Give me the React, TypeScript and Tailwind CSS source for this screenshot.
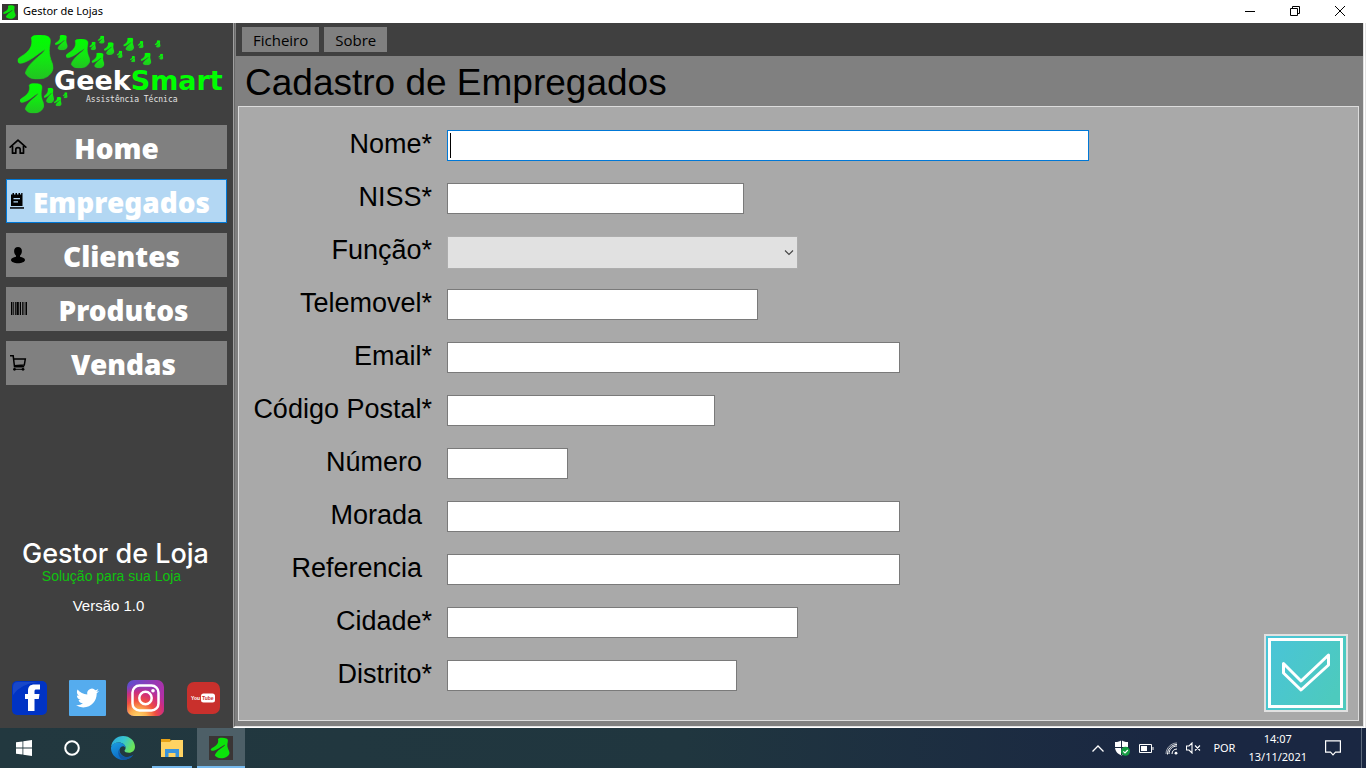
import React from "react";

const BLOB =
  "M94 113 C100 103 126 103 142 109 C151 113 152 119 150 132 C147 146 147 158 150 170 C152 182 160 192 160 205 C154 226 136 238 112 238 C94 238 80 229 76 219 C80 204 92 190 108 176 C122 164 134 156 135 148 C126 154 112 164 98 174 C84 183 70 190 60 190 C53 189 51 180 55 176 C64 168 78 162 85 152 C94 142 98 130 94 113 Z";

const LOGO_BLOBS: [number, number, number, number][] = [
  [53, 105, 107, 133],
  [165, 105, 38, 46],
  [198, 117, 72, 88],
  [268, 125, 20, 26],
  [293, 107, 21, 24],
  [312, 127, 31, 38],
  [275, 158, 38, 47],
  [350, 152, 18, 22],
  [370, 113, 32, 40],
  [390, 168, 16, 19],
  [413, 123, 18, 22],
  [422, 158, 32, 38],
  [464, 121, 18, 22],
  [475, 161, 15, 18],
  [60, 250, 72, 90],
  [132, 263, 30, 47],
  [162, 291, 23, 28],
  [188, 277, 15, 18],
];

function BlobIcon({ className }: { className: string }) {
  return (
    <svg className={className} viewBox="0 0 24 24" aria-hidden="true">
      <rect width="24" height="24" fill="#3a3535" />
      <path d={BLOB} fill="#0be30b" transform="translate(-7.5 -14.2) scale(0.175 0.153)" />
    </svg>
  );
}

function Logo() {
  return (
    <svg
      className="h-[97px] w-[233px] shrink-0"
      viewBox="0 23 233 97"
      role="img"
      aria-label="GeekSmart Assistência Técnica"
    >
      <defs>
        <linearGradient id="leaf" x1="0" y1="0" x2="0" y2="1">
          <stop offset="0" stopColor="#00ff00" />
          <stop offset="0.5" stopColor="#11ea11" />
          <stop offset="1" stopColor="#22c322" />
        </linearGradient>
      </defs>
      <g transform="scale(0.33333)">
        {LOGO_BLOBS.map(([x, y, w, h], i) => (
          <svg key={i} x={x} y={y} width={w} height={h} viewBox="53 105 107 133" preserveAspectRatio="none">
            <path d={BLOB} fill="url(#leaf)" stroke="url(#leaf)" strokeWidth="2" />
          </svg>
        ))}
      </g>
      <text x="54" y="90" className="font-['DejaVu_Sans',sans-serif] text-[27px] font-bold">
        <tspan fill="#ffffff">Geek</tspan>
        <tspan fill="#00ff00">Smart</tspan>
      </text>
      <text x="86" y="102" fill="#e4e4e4" className="font-['DejaVu_Sans_Mono',monospace] text-[8px]">
        Assistência Técnica
      </text>
    </svg>
  );
}

const HomeIcon = (
  <svg className="h-[18px] w-[18px]" viewBox="0 0 18 18" fill="none" stroke="#000" strokeWidth="1.7">
    <path d="M1.2 9.2 9 2.2l7.800 7" strokeLinecap="round" strokeLinejoin="round" />
    <path d="M3.500 7.800v7.400h3.300v-3.600c0-1.200.8-2 2.200-2s2.200.8 2.200 2v3.600h3.300V7.800" strokeLinejoin="round" />
  </svg>
);
const NoteIcon = (
  <svg className="h-[18px] w-[18px]" viewBox="0 0 18 18" fill="#000">
    <path d="M2 2.500h1.500V1H5v1.500h1.500V1H8v1.500h1.500V1H11v1.500h1.200V1h1.300v13H2z" />
    <path d="M4.500 6.600h6.500M4.500 9.800h4.500" stroke="#b4d7f3" strokeWidth="1.300" />
    <path d="M1 15.200h14v1.500H1z" />
  </svg>
);
const PersonIcon = (
  <svg className="h-[18px] w-[18px]" viewBox="0 0 18 18" fill="#000">
    <path d="M9 1c2.300 0 3.900 1.500 3.900 3.900 0 2-.8 3.700-1.900 4.700v1.100c2.600.5 5 1.500 5 3.300 0 2-3.500 3.200-7 3.200s-7-1.200-7-3.200c0-1.800 2.400-2.800 5-3.300V9.600c-1.100-1-1.900-2.700-1.900-4.700C5.100 2.500 6.700 1 9 1z" />
  </svg>
);
const BarcodeIcon = (
  <svg className="h-[18px] w-[18px]" viewBox="0 0 18 18" fill="#000">
    <path d="M2 2h1.400v13H2zM4.300 2h.8v13h-.8zM6 2h.8v13H6zM7.500 2h2.300v13H7.500zM10.800 2h1.200v13h-1.200zM13 2h.8v13H13zM14.500 2h.8v13h-.8zM16.500 2h1.500v13h-1.500z" />
  </svg>
);
const CartIcon = (
  <svg className="h-[18px] w-[18px]" viewBox="0 0 18 18" fill="none" stroke="#000" strokeWidth="1.500">
    <path d="M1 1.800h3.200l1.300 11h9.700M4.500 5h11.800l-1 6-10 .8" />
    <circle cx="5.500" cy="15.300" r="1.400" fill="#000" stroke="none" />
    <circle cx="14" cy="15.300" r="1.400" fill="#000" stroke="none" />
    <path d="M5.500 15.300H14" strokeWidth="1" />
  </svg>
);

const NAV = [
  { label: "Home", icon: HomeIcon, pad: "pr-5" },
  { label: "Empregados", icon: NoteIcon, pad: "pr-[10px]" },
  { label: "Clientes", icon: PersonIcon, pad: "pr-[10px]" },
  { label: "Produtos", icon: BarcodeIcon, pad: "pr-[6px]" },
  { label: "Vendas", icon: CartIcon, pad: "pr-[6px]" },
];

function NavButton({ label, icon, pad, active }: { label: string; icon: React.ReactNode; pad: string; active: boolean }) {
  return (
    <button
      type="button"
      className={
        "flex h-11 w-full items-center border pl-[2px] " +
        pad +
        (active ? " border-[#0078d7] bg-[#b3d7f3]" : " border-[#808080] bg-[#808080]")
      }
    >
      {icon}
      <span className="flex-1 pt-[2px] text-center font-['Noto_Sans',sans-serif] text-[28px] leading-9 font-black text-white">
        {label}
      </span>
    </button>
  );
}

function Facebook() {
  return (
    <svg className="h-[34px] w-[35px]" viewBox="0 0 35 34">
      <rect width="35" height="34" rx="5" fill="#0033c4" />
      <path d="M1 14V6q0-5 5-5h20Q8 3 1 14z" fill="#2f5bd0" opacity=".5" />
      <path d="M16 30V18h-3v-5h3v-3c0-4.500 2.200-6.500 6.500-6.500H28v5h-3.500c-1.500 0-2 .6-2 2V13h5l-.7 5h-4.300v12z" fill="#fff" />
    </svg>
  );
}
function Twitter() {
  return (
    <svg className="h-9 w-[37px]" viewBox="0 0 37 36">
      <rect width="37" height="36" rx="1" fill="#55acee" />
      <path
        transform="translate(7 6.500) scale(0.96)"
        fill="#fff"
        d="M23.950 4.570a10 10 0 0 1-2.820.77 4.960 4.960 0 0 0 2.160-2.720c-.95.550-2 .95-3.130 1.190a4.920 4.920 0 0 0-8.380 4.480C7.690 8.090 4.070 6.130 1.640 3.160a4.820 4.820 0 0 0-.67 2.480c0 1.710.87 3.210 2.190 4.100a4.900 4.900 0 0 1-2.230-.62v.06a4.920 4.920 0 0 0 3.950 4.830 5 5 0 0 1-2.210.09 4.940 4.940 0 0 0 4.600 3.420A9.870 9.870 0 0 1 0 19.540a13.940 13.940 0 0 0 7.550 2.210c9.050 0 14-7.500 14-13.980 0-.21 0-.42-.02-.63A9.940 9.940 0 0 0 24 4.590z"
      />
    </svg>
  );
}
function Instagram() {
  return (
    <svg className="h-9 w-[37px]" viewBox="0 0 37 36">
      <defs>
        <linearGradient id="igBase" x1="0" y1="0" x2="1" y2="0.3">
          <stop offset="0" stopColor="#5b4fd0" />
          <stop offset="1" stopColor="#b030a8" />
        </linearGradient>
        <radialGradient id="igWarm" cx="0.3" cy="1.050" r="0.95">
          <stop offset="0" stopColor="#ffdc70" />
          <stop offset="0.25" stopColor="#fdb050" />
          <stop offset="0.5" stopColor="#f05040" />
          <stop offset="0.75" stopColor="#d42c78" stopOpacity="0.9" />
          <stop offset="1" stopColor="#b030a8" stopOpacity="0" />
        </radialGradient>
      </defs>
      <rect width="37" height="36" rx="7" fill="url(#igBase)" />
      <rect width="37" height="36" rx="7" fill="url(#igWarm)" />
      <g fill="none" stroke="#fff" strokeWidth="2.500">
        <rect x="5.500" y="5.500" width="26" height="25" rx="7" />
        <circle cx="18.500" cy="18" r="6.200" />
      </g>
      <circle cx="26" cy="10.800" r="1.800" fill="#fff" />
    </svg>
  );
}
function YouTube() {
  return (
    <svg className="h-8 w-[33px]" viewBox="0 0 33 32">
      <rect width="33" height="32" rx="7" fill="#c9302c" />
      <rect x="14" y="11.500" width="14" height="9" rx="2.500" fill="#fff" />
      <text x="4" y="18" fill="#fff" className="font-['Liberation_Sans_Narrow','Liberation_Sans',sans-serif] text-[5px] font-bold">
        You
      </text>
      <text x="15" y="18" fill="#c9302c" className="font-['Liberation_Sans_Narrow','Liberation_Sans',sans-serif] text-[5px] font-bold">
        Tube
      </text>
    </svg>
  );
}

const SOCIAL = [
  { name: "Facebook", icon: <Facebook /> },
  { name: "Twitter", icon: <Twitter /> },
  { name: "Instagram", icon: <Instagram /> },
  { name: "YouTube", icon: <YouTube /> },
];

function Sidebar() {
  return (
    <aside className="flex w-[233px] shrink-0 flex-col bg-[#404040]">
      <Logo />
      <nav className="mt-[5px] flex flex-col gap-[10px] pr-[6px] pl-[6px]">
        {NAV.map((n) => (
          <NavButton key={n.label} label={n.label} icon={n.icon} pad={n.pad} active={n.label === "Empregados"} />
        ))}
      </nav>
      <div className="mt-auto flex flex-col items-center pr-[6px] text-white">
        <p className="pl-1 font-['Inter',sans-serif] text-[27px] leading-7 font-medium">Gestor de Loja</p>
        <p className="pr-1 text-[14px] leading-4 text-[#0fc30f]">Solução para sua Loja</p>
        <p className="mt-3 pr-[10px] text-[15px] leading-5">Versão 1.0</p>
      </div>
      <div className="mt-[62px] mb-[10px] grid grid-cols-[repeat(4,58px)]">
        {SOCIAL.map((s) => (
          <a key={s.name} href="#" aria-label={s.name} className="flex h-10 items-center justify-center">
            {s.icon}
          </a>
        ))}
      </div>
    </aside>
  );
}

const FIELDS = [
  { id: "nome", label: "Nome", required: true, width: "w-[642px]" },
  { id: "niss", label: "NISS", required: true, width: "w-[297px]" },
  { id: "funcao", label: "Função", required: true, width: "w-[351px]" },
  { id: "telemovel", label: "Telemovel", required: true, width: "w-[311px]" },
  { id: "email", label: "Email", required: true, width: "w-[453px]" },
  { id: "codigo", label: "Código Postal", required: true, width: "w-[268px]" },
  { id: "numero", label: "Número", required: false, width: "w-[121px]" },
  { id: "morada", label: "Morada", required: false, width: "w-[453px]" },
  { id: "referencia", label: "Referencia", required: false, width: "w-[453px]" },
  { id: "cidade", label: "Cidade", required: true, width: "w-[351px]" },
  { id: "distrito", label: "Distrito", required: true, width: "w-[290px]" },
];

function Control({ id, width }: { id: string; width: string }) {
  if (id === "funcao") {
    return (
      <div className={"relative " + width}>
        <select id={id} className="block h-[33px] w-full appearance-none border border-[#adadad] bg-[#e1e1e1] px-2 text-xl outline-none">
          <option value=""></option>
        </select>
        <svg className="pointer-events-none absolute top-3 right-1 h-2 w-[10px]" viewBox="0 0 10 8" fill="none" stroke="#444">
          <path d="M1 2.500 5 6.500 9 2.500" strokeWidth="1.100" />
        </svg>
      </div>
    );
  }
  const focused = id === "nome";
  return (
    <div className={"relative " + width}>
      <input
        id={id}
        type="text"
        autoFocus={focused}
        className={
          "block h-[31px] w-full border bg-white px-1 text-xl outline-none " +
          (focused ? "border-[#0078d7] caret-transparent" : "border-[#7a7a7a]")
        }
      />
      {focused && <span className="pointer-events-none absolute top-[3px] left-[3px] h-[25px] w-px bg-black" />}
    </div>
  );
}

function EmployeeForm() {
  return (
    <form className="mr-1 mb-[5px] ml-[2px] flex flex-1 justify-between border border-[#dcdcdc] bg-[#a9a9a9]">
      <div className="flex flex-col gap-[22px] pt-[23px]">
        {FIELDS.map((f) => (
          <div key={f.id} className="grid h-[31px] grid-cols-[193px_auto] items-start gap-x-[15px]">
            <label
              htmlFor={f.id}
              className={"text-right text-[27px] leading-[29px] whitespace-nowrap text-black " + (f.required ? "" : "pr-[10px]")}
            >
              {f.label}
              {f.required && "*"}
            </label>
            <Control id={f.id} width={f.width} />
          </div>
        ))}
      </div>
      <button type="submit" aria-label="Confirmar" className="mr-[10px] mb-2 self-end border-2 border-[#e1e1e1]">
        <svg className="h-[74px] w-20" viewBox="0 0 80 74" fill="none" stroke="#fff">
          <defs>
            <linearGradient id="teal" x1="0" y1="0" x2="1" y2="0.5">
              <stop offset="0" stopColor="#49c4d9" />
              <stop offset="1" stopColor="#4dcabe" />
            </linearGradient>
          </defs>
          <rect width="80" height="74" fill="url(#teal)" stroke="none" />
          <rect x="3.500" y="3.500" width="72" height="67" strokeWidth="3" />
          <path d="M17.500 27.500 35 45 62.500 19V29L35 54 17.500 37z" strokeWidth="3" strokeLinejoin="round" />
        </svg>
      </button>
    </form>
  );
}

function TitleBar() {
  return (
    <header className="flex h-[23px] shrink-0 items-center bg-white pr-[3px] pl-[2px] font-['Noto_Sans',sans-serif]">
      <BlobIcon className="h-4 w-4" />
      <span className="ml-[5px] text-[11px] text-black">Gestor de Lojas</span>
      <div className="mb-[2px] ml-auto flex">
        <button type="button" aria-label="Minimizar" className="flex h-5 w-[45px] items-center justify-center">
          <svg className="h-[10px] w-[10px]" viewBox="0 0 10 10" stroke="#000">
            <path d="M0 5.500h10" />
          </svg>
        </button>
        <button type="button" aria-label="Restaurar" className="flex h-5 w-[45px] items-center justify-center">
          <svg className="h-[10px] w-[10px]" viewBox="0 0 10 10" fill="none" stroke="#000">
            <path d="M.5 2.500h7v7h-7zM2.500 2.500v-2h7v7h-2" />
          </svg>
        </button>
        <button type="button" aria-label="Fechar" className="flex h-5 w-[46px] items-center justify-center">
          <svg className="h-[10px] w-[10px]" viewBox="0 0 10 10" stroke="#000">
            <path d="M0 0l10 10M10 0 0 10" />
          </svg>
        </button>
      </div>
    </header>
  );
}

function Taskbar() {
  return (
    <footer className="flex h-10 shrink-0 bg-linear-to-r from-[#22383f] via-[#20363f] via-50% to-[#1a2742] to-85% pr-1 font-['Noto_Sans',sans-serif] text-white">
      <button type="button" aria-label="Iniciar" className="flex w-12 items-center justify-center">
        <svg className="h-4 w-4" viewBox="0 0 16 16" fill="#fff">
          <path d="M0 2.300 6.500 1.400v6.100H0zM7.300 1.300 16 0v7.500H7.300zM0 8.400h6.500v6.200L0 13.700zM7.300 8.400H16V16l-8.700-1.300z" />
        </svg>
      </button>
      <button type="button" aria-label="Cortana" className="flex w-12 items-center justify-center">
        <svg className="h-4 w-4" viewBox="0 0 16 16" fill="none" stroke="#fff" strokeWidth="2">
          <circle cx="8" cy="8" r="6.800" />
        </svg>
      </button>
      <button type="button" aria-label="Edge" className="flex w-[54px] items-center justify-center">
        <svg className="h-6 w-6" viewBox="0 0 24 24">
          <defs>
            <linearGradient id="edgeTop" x1="0" y1="0" x2="1" y2="0.4">
              <stop offset="0" stopColor="#2aa5df" />
              <stop offset="0.55" stopColor="#38c6cf" />
              <stop offset="1" stopColor="#6be35a" />
            </linearGradient>
            <linearGradient id="edgeLow" x1="0" y1="0" x2="0.6" y2="1">
              <stop offset="0" stopColor="#1b9de2" />
              <stop offset="1" stopColor="#0a62bd" />
            </linearGradient>
          </defs>
          <path d="M0 11C.8 4.500 5.800 0 12 0c7 0 12 5 12 10.800 0 3.700-2.700 6-6 6-2.800 0-4.500-1-4.500-2 0-.7 1.100-1.100 1.100-3C14.600 9 11.500 6.500 7.800 6.500 4.500 6.500 1.500 8 0 11z" fill="url(#edgeTop)" />
          <path d="M0 11.500C1 8 4.200 6.400 7.500 6.500c4.200 0 7 2.500 7.100 5.200-1-1.700-3-2-4.300-1-3.300 2.500-1.800 8 2.700 9.700 3.500 1.200 6.500.5 9.300-1.600C20.200 22 16.500 24 12.200 24 5 24-.4 18 0 11.500z" fill="url(#edgeLow)" />
          <path d="M8.400 13.200c-.8 4 2.200 7.600 7 7.900 2.600.1 5-.8 6.900-2.300C20.200 22 16.500 24 12.500 24c-4.500-1.500-6.700-7.500-4.100-10.800z" fill="#1256a0" />
        </svg>
      </button>
      <button type="button" aria-label="Explorador" className="mx-[2px] flex w-10 items-center justify-center border-b-2 border-[#76b9ed] pt-[2px]">
        <svg className="h-[18px] w-[22px]" viewBox="0 0 22 18">
          <path d="M0 0h9l1 2v3H0z" fill="#e8a317" />
          <path d="M0 3h9l1.500-2H22v17H0z" fill="#ffd363" />
          <path d="M4 10h14v8h-3.500v-4h-7v4H4z" fill="#3a94dc" />
        </svg>
      </button>
      <button type="button" aria-label="Gestor de Lojas" className="ml-[3px] flex w-12 items-center justify-center border-b-2 border-[#76b9ed] bg-[#4d5f67] pt-[2px]">
        <BlobIcon className="h-6 w-6" />
      </button>

      <div className="ml-auto flex items-center">
        <svg className="mr-[10px] h-[7px] w-3" viewBox="0 0 12 7" fill="none" stroke="#fff" strokeWidth="1.300">
          <path d="M.5 6.500 6 1l5.500 5.500" />
        </svg>
        <svg className="mr-[9px] h-4 w-4" viewBox="0 0 16 16">
          <path d="M7.500 0C9 1.500 11 2 14 2v5c0 4-3 7-6.500 8.500C3.500 14 1 11 1 7V2c3 0 5-.5 6.500-2z" fill="#fff" />
          <path d="M7.500 0v15M1 7.500h13" stroke="#1b2a40" strokeWidth="1" />
          <circle cx="11.500" cy="11.300" r="4.500" fill="#149b42" />
          <path d="m9.300 11.300 1.700 1.700 2.800-3" fill="none" stroke="#fff" strokeWidth="1.100" />
        </svg>
        <svg className="mr-[11px] h-[9px] w-[15px]" viewBox="0 0 15 9" fill="none" stroke="#fff">
          <path d="M.5.5h12v8H.5zM14 3v3" />
          <path d="M2 2h6v5H2z" fill="#fff" stroke="none" />
        </svg>
        <svg className="mr-2 h-[13px] w-[13px]" viewBox="0 0 13 13" fill="none" stroke="#fff" strokeWidth="1">
          <path d="M1 12C1 6 6 1 12 1" opacity=".6" />
          <path d="M4 12c0-4.500 3.500-8 8-8M7 12c0-3 2-5 5-5M2.500 12.500c-.3-5 4-10 9.500-10" />
          <circle cx="11" cy="11.200" r="1.400" fill="#fff" stroke="none" />
        </svg>
        <svg className="mr-3 h-3 w-[15px]" viewBox="0 0 15 12" fill="none" stroke="#fff">
          <path d="M.5 4v4H3l3 3V1L3 4zM9 3.500l5 5M14 3.500l-5 5" strokeWidth="1.100" />
        </svg>
        <span className="text-[11px]">POR</span>
        <div className="ml-[13px] text-center text-[11px] leading-[18px]">
          <div>14:07</div>
          <div>13/11/2021</div>
        </div>
        <svg className="mr-5 ml-[18px] h-4 w-4" viewBox="0 0 16 16" fill="none" stroke="#fff" strokeWidth="1.200">
          <path d="M.6.8h14.800v11.400H10.500L8 14.800l-2.500-2.600H.6z" />
        </svg>
        <div className="h-10 w-px bg-[#5d6a7c]" />
      </div>
    </footer>
  );
}

export default function App() {
  return (
    <div className="flex min-h-screen flex-col bg-[#e3e3e3] font-['Liberation_Sans',Arial,sans-serif]">
      <TitleBar />
      <div className="flex flex-1 pr-px">
        <Sidebar />
        <main className="flex min-w-0 flex-1 border-r border-b border-l border-r-white border-b-white border-l-[#a0a0a0]">
          <div className="flex min-w-0 flex-1 flex-col border-r border-b border-l border-r-[#e3e3e3] border-b-[#e3e3e3] border-l-[#696969] bg-[#808080] pl-px">
            <div className="flex h-[33px] shrink-0 items-center gap-[5px] bg-[#404040] pl-[6px]">
              <button type="button" className="h-[25px] bg-[#808080] px-[11px] pt-px font-['Open_Sans',sans-serif] text-[15px] leading-6 text-black">
                Ficheiro
              </button>
              <button type="button" className="h-[25px] bg-[#808080] px-[11px] pt-px font-['Open_Sans',sans-serif] text-[15px] leading-6 text-black">
                Sobre
              </button>
            </div>
            <h1 className="h-[50px] shrink-0 pl-[9px] text-[37px] leading-[54px] text-black">Cadastro de Empregados</h1>
            <EmployeeForm />
          </div>
        </main>
      </div>
      <Taskbar />
    </div>
  );
}
